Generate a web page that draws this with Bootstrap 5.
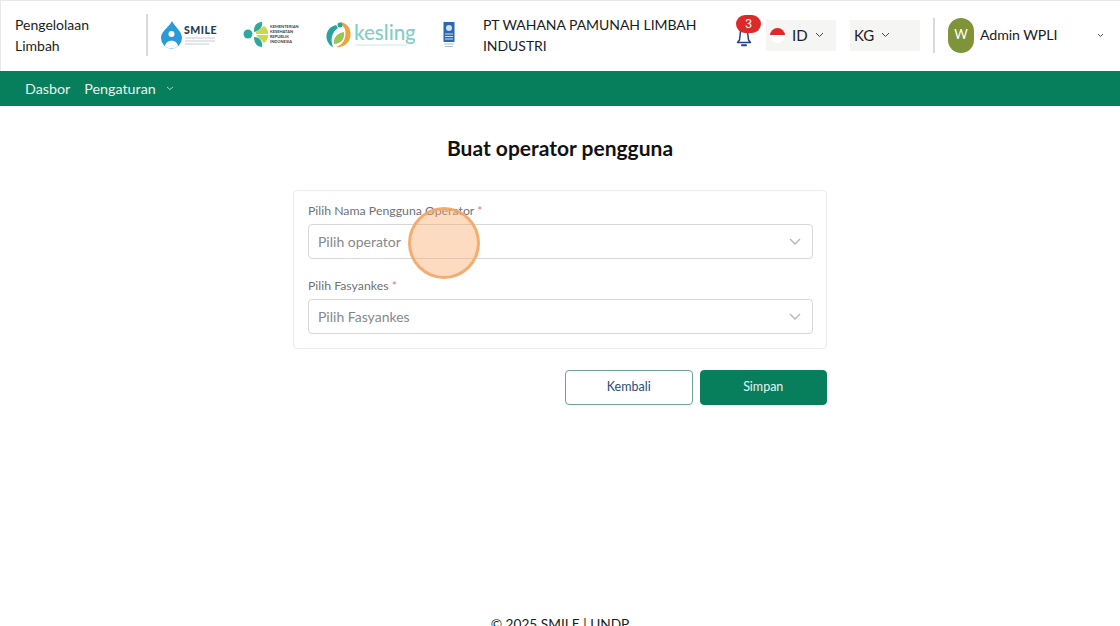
<!DOCTYPE html>
<html lang="id">
<head>
    <meta charset="UTF-8">
    <meta name="viewport" content="width=device-width, initial-scale=1.0">
    <title>Buat operator pengguna</title>
    <link href="https://cdn.jsdelivr.net/npm/bootstrap@5.3.0/dist/css/bootstrap.min.css" rel="stylesheet">
    <style>
        html, body { height: 100%; overflow: hidden; }
        body { font-family: Lato, "Liberation Sans", sans-serif; color: #1c1c1c; background: #fff; }
        .top-head { height: 71px; border-top: 1px solid #e8e8e8; border-left: 1px solid #e8e8e8; padding-left: 14px; padding-bottom: 2px; }
        .app-name { width: 131px; padding-right: 40px; font-size: 14px; line-height: 21px; }
        .head-sep { width: 2px; height: 42px; background: #d9d9d9; flex: none; }
        .logo-box { flex: none; display: block; }
        .logo-smile { margin-left: 12px; }
        .logo-kemkes { margin-left: 25px; }
        .logo-kesling { margin-left: 26px; }
        .logo-undp { margin-left: 28px; }
        .org-name { width: 240px; margin-left: 28px; font-size: 14px; line-height: 21px; letter-spacing: -.05px; }
        .bell-wrap { width: 31px; height: 36px; margin-left: 13px; }
        .bell-icon { left: 0; top: 11px; }
        .bell-badge { top: -2px; left: 0; width: 25px; height: 18px; border-radius: 9px; background: #dc2a2a; color: #fff; font-size: 12px; line-height: 18px; text-align: center; font-family: "Liberation Sans", sans-serif; }
        .pick-box { width: 70px; height: 31px; background: #f5f5f3; font-size: 15px; flex: none; padding-left: 4px; }
        .pick-id { margin-left: -1px; }
        .pick-kg { margin-left: 14px; }
        .flag-dot { width: 15px; height: 15px; border-radius: 50%; background: linear-gradient(#dc2a2a 50%, #fff 50%); }
        .pick-text { margin-left: 7px; }
        .pick-arrow { margin-left: 7px; }
        .sep-user { height: 35px; margin-left: 13px; }
        .user-dot { width: 26px; height: 35px; margin-left: 13px; border-radius: 13px; background: #7f9439; color: #fff; font-size: 13px; flex: none; }
        .user-name { width: 117px; margin-left: 6px; font-size: 14.2px; letter-spacing: -.1px; flex: none; }
        .green-nav { height: 35px; background: #077e5c; padding-left: 25px; font-size: 14.3px; color: #e8f3ef; }
        .nav-second { margin-left: 14px; }
        .nav-arrow { margin-left: 10px; }
        .main-area { height: 507px; }
        .page-title { font-size: 21px; font-weight: 700; line-height: 26px; margin: 0; padding-top: 29px; padding-bottom: 29px; color: #111; }
        .form-panel { width: 534px; height: 159px; border: 1px solid #ececec; border-radius: 4px; padding: 12px 14px 0; }
        .form-label-s { font-size: 12.3px; line-height: 16px; color: #6f7378; margin-bottom: 5px; display: block; }
        .req-mark { color: #de7a80; }
        .form-select.pick-input { height: 35px; width: 505px; font-size: 14px; color: #85898d; padding: 0 9px; border-color: #d6d8da; border-radius: 4px; background-image: none; font-family: inherit; }
        .select-wrap + .form-label-s { margin-top: 19px; }
        .select-arrow { right: 11px; top: 14px; }
        .action-row { width: 534px; margin-top: 21px; gap: 7px; }
        .btn.act-btn { width: 127.5px; height: 34.5px; font-size: 12.5px; font-weight: 400; border-radius: 4px; padding: 0; line-height: 32px; }
        .btn.back-btn { background: #fff; border: 1px solid #6ea295; color: #1f4e79; }
        .btn.save-btn { background: #077e5c; border: 1px solid #077e5c; color: #e6f3ef; }
        .click-ring { left: 114px; top: 16px; width: 72px; height: 72px; border-radius: 50%; background: rgba(248, 170, 105, .42); border: 3px solid rgba(243, 165, 100, .85); pointer-events: none; }
        .page-foot { font-size: 13.7px; line-height: 18px; padding-top: 2px; }
    </style>
</head>
<body>
    <header class="top-head d-flex align-items-center bg-white">
        <div class="app-name">Pengelolaan Limbah</div>
        <div class="head-sep"></div>

        <!-- logo SMILE -->
        <svg class="logo-box logo-smile" width="58" height="30" viewBox="0 0 58 30">
            <path d="M12 1 C15 7 22 11 22 18 a10.5 10.5 0 0 1-21 0 C1 11 9 7 12 1z" fill="#2a9bd8"/>
            <circle cx="11.5" cy="14" r="3" fill="#fff"/>
            <path d="M5 26 C6 19 17 19 18 26 L15 28 H8z" fill="#fff"/>
            <text x="24" y="14" font-family="Lato, sans-serif" font-size="10.5" font-weight="900" fill="#26404f" letter-spacing=".5">SMILE</text>
            <path d="M25 18h30M25 21h30M25 24h24" stroke="#c3ccd2" stroke-width="1"/>
        </svg>

        <!-- logo kemenkes -->
        <svg class="logo-box logo-kemkes" width="56" height="28" viewBox="0 0 56 28">
            <circle cx="5" cy="13" r="4.5" fill="#2fa9a0"/>
            <path d="M11 8 C12 3 15 1 19 1 C20 5 17 10 11 11z" fill="#2fa9a0"/>
            <path d="M11 16 C17 16 20 21 19 26 C14 26 11 22 11 16z" fill="#2fa9a0"/>
            <path d="M13 11 L21 5 C25 8 25 11 25 13 H13z" fill="#c9d94a"/>
            <path d="M13 14 H25 C25 17 24 20 21 22z" fill="#c9d94a"/>
            <g font-family="Lato, sans-serif" font-size="4" font-weight="700" fill="#3a3a3a">
                <text x="27" y="7">KEMENTERIAN</text>
                <text x="27" y="12">KESEHATAN</text>
                <text x="27" y="17">REPUBLIK</text>
                <text x="27" y="22">INDONESIA</text>
            </g>
        </svg>

        <!-- logo kesling -->
        <svg class="logo-box logo-kesling" width="90" height="28" viewBox="0 0 90 28">
            <path d="M15 1 C24 2 27 10 25 17 C23 24 16 27 11 26 C18 24 22 17 20 8z" fill="#f2a23a"/>
            <path d="M11 4 C3 6 0 13 2 19 C3 22 5 25 8 26 C5 18 7 11 13 7z" fill="#2aa59a"/>
            <circle cx="15" cy="4" r="2.5" fill="#2aa59a"/>
            <path d="M9 23 C8 16 13 12 19 11 C20 18 16 23 9 23z" fill="#9cc653"/>
            <text x="29" y="19" font-family="Lato, sans-serif" font-size="20.5" font-weight="500" fill="#7fcfc8">kesling</text>
            <path d="M30 24h52" stroke="#cfe9e6" stroke-width="1"/>
        </svg>

        <!-- logo undp -->
        <svg class="logo-box logo-undp" width="12" height="26" viewBox="0 0 12 26">
            <rect x="0.5" y="0" width="11" height="20" fill="#2a69b0"/>
            <circle cx="6" cy="6" r="3" fill="#cfe0f2"/>
            <path d="M2 12h8M2 14.5h8M2 17h8" stroke="#cfe0f2" stroke-width="1.2"/>
            <path d="M1 22h10M2 24.5h8" stroke="#a9c0da" stroke-width="1"/>
        </svg>

        <div class="org-name">PT WAHANA PAMUNAH LIMBAH INDUSTRI</div>

        <div class="bell-wrap position-relative flex-shrink-0">
            <svg class="bell-icon position-absolute" width="16" height="20" viewBox="0 0 16 20">
                <path d="M4.5 3.5 C4.5 2 6 1 8 1 C10 1 11.5 2 11.5 3.5 L12.5 12 L14.5 14.5 H1.5 L3.5 12z" fill="none" stroke="#24418f" stroke-width="1.5" stroke-linejoin="round"/>
                <path d="M6 17.3 H10" stroke="#24418f" stroke-width="2" stroke-linecap="round"/>
            </svg>
            <span class="bell-badge position-absolute">3</span>
        </div>

        <div class="pick-box pick-id d-flex align-items-center">
            <span class="flag-dot d-inline-block"></span>
            <span class="pick-text">ID</span>
            <svg class="pick-arrow" width="9" height="6" viewBox="0 0 9 6"><path d="M1 1l3.5 3.5L8 1" fill="none" stroke="#444" stroke-width="1"/></svg>
        </div>
        <div class="pick-box pick-kg d-flex align-items-center">
            <span>KG</span>
            <svg class="pick-arrow" width="9" height="6" viewBox="0 0 9 6"><path d="M1 1l3.5 3.5L8 1" fill="none" stroke="#444" stroke-width="1"/></svg>
        </div>

        <div class="head-sep sep-user"></div>
        <div class="user-dot d-flex align-items-center justify-content-center">W</div>
        <div class="user-name">Admin WPLI</div>
        <svg class="flex-shrink-0" width="7" height="5" viewBox="0 0 7 5"><path d="M1 1l2.5 2.5L6 1" fill="none" stroke="#555" stroke-width="1"/></svg>
    </header>

    <nav class="green-nav d-flex align-items-center">
        <span>Dasbor</span>
        <span class="nav-second">Pengaturan</span>
        <svg class="nav-arrow" width="8" height="5" viewBox="0 0 8 5"><path d="M1 1l3 2.5L7 1" fill="none" stroke="#a8d2c5" stroke-width="1"/></svg>
    </nav>

    <main class="main-area d-flex flex-column align-items-center">
        <h1 class="page-title text-center">Buat operator pengguna</h1>
        <div class="form-panel position-relative">
            <label class="form-label-s">Pilih Nama Pengguna Operator <span class="req-mark">*</span></label>
            <div class="select-wrap position-relative">
                <select class="form-select pick-input"><option>Pilih operator</option></select>
                <svg class="select-arrow position-absolute" width="12" height="8" viewBox="0 0 12 8"><path d="M1 1l5 5 5-5" fill="none" stroke="#b5b8ba" stroke-width="1.4"/></svg>
            </div>
            <label class="form-label-s">Pilih Fasyankes <span class="req-mark">*</span></label>
            <div class="select-wrap position-relative">
                <select class="form-select pick-input"><option>Pilih Fasyankes</option></select>
                <svg class="select-arrow position-absolute" width="12" height="8" viewBox="0 0 12 8"><path d="M1 1l5 5 5-5" fill="none" stroke="#b5b8ba" stroke-width="1.4"/></svg>
            </div>
            <div class="click-ring position-absolute"></div>
        </div>
        <div class="action-row d-flex justify-content-end">
            <button type="button" class="btn act-btn back-btn">Kembali</button>
            <button type="button" class="btn act-btn save-btn">Simpan</button>
        </div>
    </main>

    <footer class="page-foot text-center">© 2025 SMILE | UNDP</footer>
</body>
</html>
